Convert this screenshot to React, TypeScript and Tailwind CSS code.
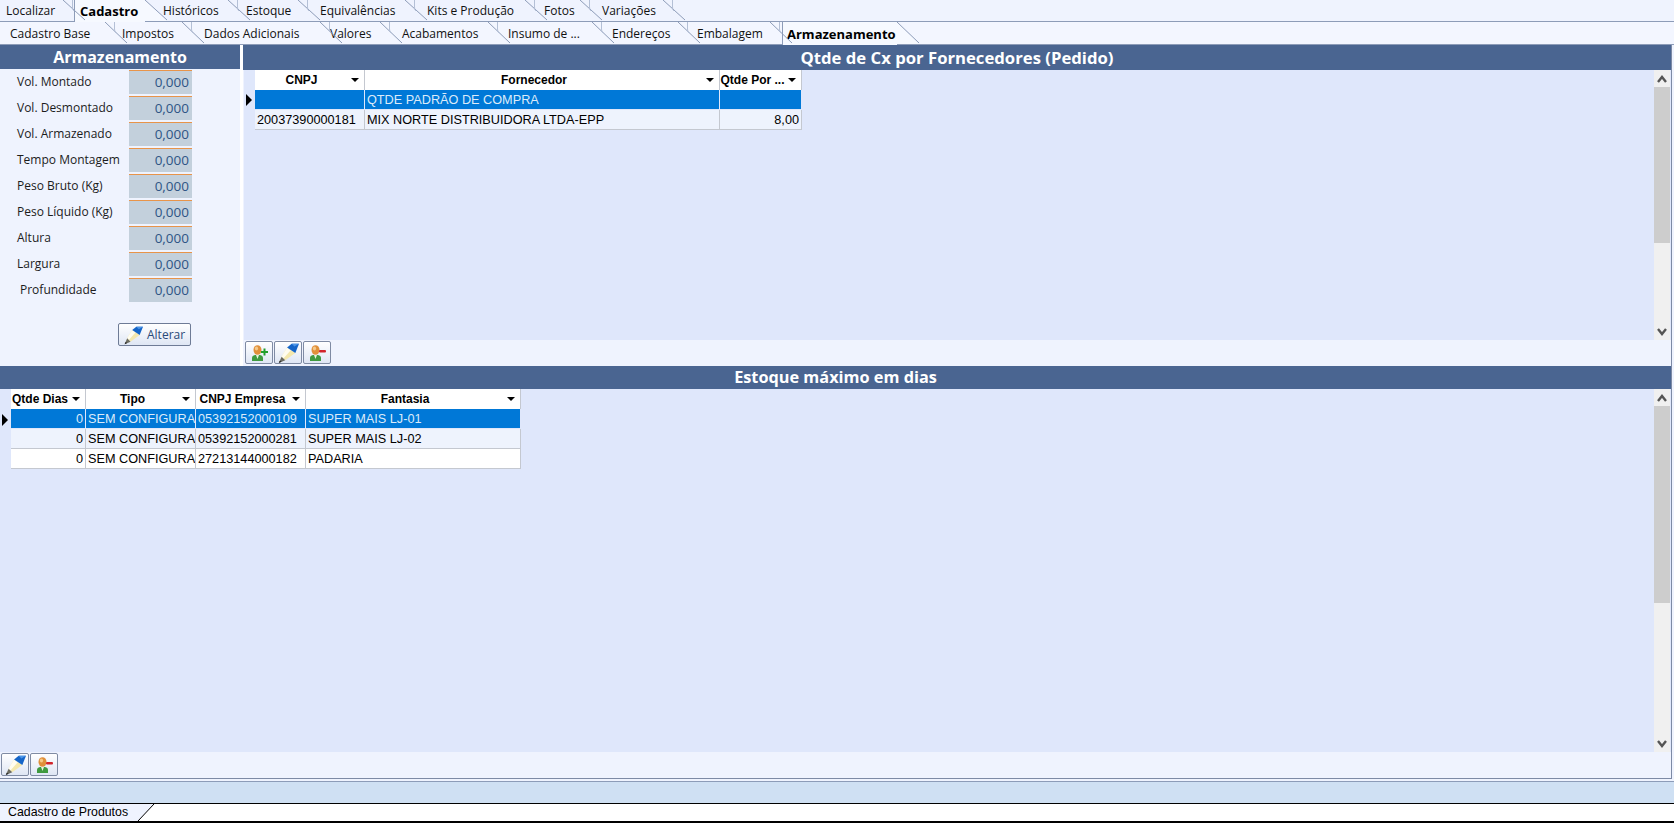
import React from "react";

const TAB_FONT = "font-['Open_Sans','Liberation_Sans',sans-serif]";

type TabT = { label: string; w: number; pl: number; active?: boolean; inset?: number };

const top: TabT[] = [
  { label: "Localizar", w: 63, pl: 6 },
  { label: "Cadastro", w: 82, pl: 17, active: true, inset: 11 },
  { label: "Históricos", w: 83, pl: 18 },
  { label: "Estoque", w: 70, pl: 18 },
  { label: "Equivalências", w: 107, pl: 22 },
  { label: "Kits e Produção", w: 120, pl: 22 },
  { label: "Fotos", w: 55, pl: 19 },
  { label: "Variações", w: 83, pl: 22 },
];
const second: TabT[] = [
  { label: "Cadastro Base", w: 105, pl: 10 },
  { label: "Impostos", w: 77, pl: 17 },
  { label: "Dados Adicionais", w: 138, pl: 22 },
  { label: "Valores", w: 60, pl: 10 },
  { label: "Acabamentos", w: 108, pl: 22 },
  { label: "Insumo de ...", w: 104, pl: 20 },
  { label: "Endereços", w: 86, pl: 20 },
  { label: "Embalagem", w: 92, pl: 19 },
  { label: "Armazenamento", w: 127, pl: 17, active: true, inset: 12 },
];

function Tab({ t, h }: { t: TabT; h: number }) {
  return (
    <div className="relative shrink-0" style={{ width: t.w, height: h }}>
      {t.active && (
        <div
          className="absolute top-0 right-0 bg-[#f6f9ff] border-l border-[#8d9cb8]"
          style={{ left: t.inset, height: h + 1 }}
        />
      )}
      <span
        className={`absolute top-0 leading-[22px] whitespace-nowrap ${t.active ? "font-bold text-black text-[13px]" : "text-[#111] text-[12px]"}`}
        style={{ left: t.pl, top: h === 22 ? 1 : 0 }}
      >
        {t.label}
      </span>
      <svg className="absolute top-0 left-full z-10" width="24" height={h} viewBox={`0 0 24 ${h}`}>
        {t.active && <polygon points={`0,0 22,${h} 0,${h}`} fill="#f6f9ff" />}
        <path d={`M0 0 L22 ${h - 1}`} stroke="#8d9cb8" fill="none" strokeWidth="1" />
        {!t.active && <path d="M9.5 0 V7 Q9.5 10 11 11" stroke="#b4c0d6" fill="none" strokeWidth="1" />}
      </svg>
    </div>
  );
}

function Pencil({ size = 22 }: { size?: number }) {
  return (
    <svg width={size} height={size} viewBox="0 0 24 24">
      <polygon points="11,6 20,12 9,20 5,16" fill="#f4e8ae" />
      <polygon points="11,6 5,16 7,18 15,9" fill="#fffdf0" />
      <polygon points="11,6 16,2 24,2 20,12" fill="#1565c8" />
      <polygon points="16,2 24,2 19,5" fill="#4d96e8" />
      <polygon points="5,16 9,20 2,23" fill="#6b6b60" />
      <polygon points="3,20.5 5,21.5 2,23" fill="#222" />
    </svg>
  );
}

function Person({ sign }: { sign: "plus" | "minus" }) {
  return (
    <svg width="20" height="18" viewBox="0 0 20 18">
      <path d="M3 17 V14 Q3 11.5 6 11 H11 Q14 11.5 14 14 V17 Z" fill="#3f9a3f" />
      <path d="M7 11 L8.5 15 L10 11 Z" fill="#e8f5e0" />
      <ellipse cx="8.5" cy="6" rx="4" ry="4.8" fill="#e0903a" />
      <ellipse cx="7.5" cy="4.5" rx="1.6" ry="2" fill="#f6c988" />
      {sign === "plus" ? (
        <path d="M12 7 H14.5 V4.5 H16.5 V7 H19 V9 H16.5 V11.5 H14.5 V9 H12 Z" fill="#23a02c" />
      ) : (
        <rect x="12" y="6" width="7" height="2.4" rx="1" fill="#d2232a" />
      )}
    </svg>
  );
}

function IconBtn({ children }: { children: React.ReactNode }) {
  return (
    <div className="w-[28px] h-[23px] flex items-center justify-center rounded-[2px] border border-[#7f8ba3] bg-gradient-to-b from-white to-[#dfe6f4]">
      {children}
    </div>
  );
}

function Triangle() {
  return (
    <div className="w-0 h-0 border-l-[4px] border-r-[4px] border-t-[4px] border-l-transparent border-r-transparent border-t-black" />
  );
}

function Chevron({ up }: { up?: boolean }) {
  return (
    <svg width="10" height="8" viewBox="0 0 10 8">
      <path d={up ? "M1 7 L5 2 L9 7" : "M1 1 L5 6 L9 1"} stroke="#555" strokeWidth="2.4" fill="none" />
    </svg>
  );
}

function Scrollbar({ thumb }: { thumb: number }) {
  return (
    <div className="w-[16px] shrink-0 ml-auto mr-px flex flex-col bg-[#f0f0f0]">
      <div className="h-[17px] flex items-center justify-center">
        <Chevron up />
      </div>
      <div className="bg-[#cdcdcd]" style={{ height: thumb }} />
      <div className="flex-1" />
      <div className="h-[17px] flex items-center justify-center">
        <Chevron />
      </div>
    </div>
  );
}

type Col = { title: string; w: number; align?: "right" };

function Grid({ cols, rows, selected = 0 }: { cols: Col[]; rows: string[][]; selected?: number }) {
  return (
    <div className="w-fit h-fit font-['Liberation_Sans',sans-serif] text-[12.7px] text-black">
      <div className="flex h-[20px] bg-white">
        {cols.map((c) => (
          <div
            key={c.title}
            className="relative flex items-center justify-center border-r border-[#c4c8d0] font-bold text-[12px] shrink-0 whitespace-nowrap overflow-hidden"
            style={{ width: c.w }}
          >
            <span className="pr-[16px]">{c.title}</span>
            <div className="absolute right-[5px] top-[8px]">
              <Triangle />
            </div>
          </div>
        ))}
      </div>
      {rows.map((r, i) => (
        <div
          key={i}
          className={`flex h-[20px] border-b ${
            i === selected
              ? "bg-[#0078d7] text-[#dcebfa] border-[#dfe7fb]"
              : i % 2 === 1
                ? "bg-[#eef3fd] border-[#c4c8d0]"
                : "bg-white border-[#c4c8d0]"
          }`}
        >
          {r.map((v, j) => (
            <div
              key={j}
              className={`shrink-0 px-[2px] leading-[21px] overflow-hidden whitespace-nowrap border-r ${
                i === selected ? "border-[#dfe7fb]" : "border-[#c4c8d0]"
              } ${cols[j].align === "right" ? "text-right" : ""}`}
              style={{ width: cols[j].w }}
            >
              {v}
            </div>
          ))}
        </div>
      ))}
    </div>
  );
}

const fields = [
  ["Vol. Montado", 17],
  ["Vol. Desmontado", 17],
  ["Vol. Armazenado", 17],
  ["Tempo Montagem", 17],
  ["Peso Bruto (Kg)", 17],
  ["Peso Líquido (Kg)", 17],
  ["Altura", 17],
  ["Largura", 17],
  ["Profundidade", 20],
] as const;

function Pointer() {
  return (
    <div className="w-0 h-0 border-t-[6px] border-b-[6px] border-l-[6px] border-t-transparent border-b-transparent border-l-black" />
  );
}

export default function App() {
  return (
    <div className={`w-[1674px] h-[823px] overflow-hidden flex flex-col bg-[#eff3fe] ${TAB_FONT}`}>
      <div className="h-[22px] flex shrink-0 border-b border-[#8d9cb8] bg-[#eff3fe]">
        {top.map((t) => (
          <Tab key={t.label} t={t} h={21} />
        ))}
      </div>
      <div className="h-[23px] flex shrink-0 border-b border-[#8d9cb8] bg-[#f3f6ff]">
        {second.map((t) => (
          <Tab key={t.label} t={t} h={22} />
        ))}
      </div>

      <div className="w-[1672px] h-[734px] shrink-0 flex flex-col border-r border-[#7d8aa5]">
        <div className="h-[321px] flex shrink-0">
          <div className="w-[240px] shrink-0 flex flex-col">
            <div className="h-[24px] bg-[#4a6591] text-white font-bold text-[16px] leading-[24px] text-center">
              Armazenamento
            </div>
            <div className="flex flex-col gap-[2px] pt-px">
              {fields.map(([l, p]) => (
                <div key={l} className="flex items-center h-[24px]">
                  <span className="w-[129px] text-[12px] text-[#1c1c1c] shrink-0 whitespace-nowrap" style={{ paddingLeft: p }}>
                    {l}
                  </span>
                  <div className="w-[63px] h-[24px] bg-[#c3d0dc] border-t border-[#e8944a] text-right pr-[3px] text-[13.5px] leading-[22px] text-[#2f5585]">
                    0,000
                  </div>
                </div>
              ))}
            </div>
            <div className="ml-[118px] mt-[21px] w-[73px] h-[23px] flex items-center gap-[4px] pl-[4px] rounded-[2px] border border-[#6e7b96] bg-gradient-to-b from-white to-[#dfe6f4] text-[12px] text-[#2b4a78]">
              <Pencil size={20} />
              Alterar
            </div>
          </div>
          <div className="w-[3px] shrink-0 bg-white" />
          <div className="flex-1 min-w-0 flex flex-col">
            <div className="h-[25px] shrink-0 bg-[#4a6591] text-white font-bold text-[16.7px] leading-[25px] text-center">
              Qtde de Cx por Fornecedores (Pedido)
            </div>
            <div className="h-[270px] shrink-0 ml-px bg-[#dfe7fb] flex">
              <div className="w-[11px] shrink-0 pt-[24px] pl-[2px]">
                <Pointer />
              </div>
              <Grid
                cols={[
                  { title: "CNPJ", w: 110 },
                  { title: "Fornecedor", w: 355 },
                  { title: "Qtde Por ...", w: 82, align: "right" },
                ]}
                rows={[
                  ["", "QTDE PADRÃO DE COMPRA", ""],
                  ["20037390000181", "MIX NORTE DISTRIBUIDORA LTDA-EPP", "8,00"],
                ]}
              />
              <Scrollbar thumb={156} />
            </div>
            <div className="flex-1 flex gap-px pt-px pl-[2px]">
              <IconBtn>
                <Person sign="plus" />
              </IconBtn>
              <IconBtn>
                <Pencil />
              </IconBtn>
              <IconBtn>
                <Person sign="minus" />
              </IconBtn>
            </div>
          </div>
        </div>

        <div className="h-[23px] shrink-0 bg-[#4a6591] text-white font-bold text-[16.3px] leading-[23px] text-center">
          Estoque máximo em dias
        </div>
        <div className="h-[363px] shrink-0 bg-[#dfe7fb] flex">
          <div className="w-[11px] shrink-0 pt-[25px] pl-[2px]">
            <Pointer />
          </div>
          <Grid
            cols={[
              { title: "Qtde Dias", w: 75, align: "right" },
              { title: "Tipo", w: 110 },
              { title: "CNPJ Empresa", w: 110 },
              { title: "Fantasia", w: 215 },
            ]}
            rows={[
              ["0", "SEM CONFIGURA", "05392152000109", "SUPER MAIS LJ-01"],
              ["0", "SEM CONFIGURA", "05392152000281", "SUPER MAIS LJ-02"],
              ["0", "SEM CONFIGURA", "27213144000182", "PADARIA"],
            ]}
          />
          <Scrollbar thumb={197} />
        </div>
        <div className="h-[27px] shrink-0 flex gap-px pt-px pl-px border-b border-[#7d8aa5]">
          <IconBtn>
            <Pencil />
          </IconBtn>
          <IconBtn>
            <Person sign="minus" />
          </IconBtn>
        </div>
      </div>

      <div className="h-[3px] shrink-0 bg-[#eff3fe] border-b border-[#8d9cb8]" />
      <div className="h-[22px] shrink-0 bg-[#cfe0f3] border-b border-black" />
      <div className="h-[19px] shrink-0 flex bg-white border-b-2 border-black">
        <div className="relative w-[138px] h-[17px] bg-[#eff3fe] font-['Liberation_Sans',sans-serif] text-[12.35px] leading-[17px] pl-[8px] text-black">
          Cadastro de Produtos
          <svg className="absolute top-0 left-full" width="17" height="17" viewBox="0 0 17 17">
            <polygon points="0,17 16,0 0,0" fill="#eff3fe" />
            <path d="M0 17 L16 0" stroke="#000" fill="none" />
          </svg>
        </div>
      </div>
      <div className="flex-1 bg-[#eff3fe]" />
    </div>
  );
}
